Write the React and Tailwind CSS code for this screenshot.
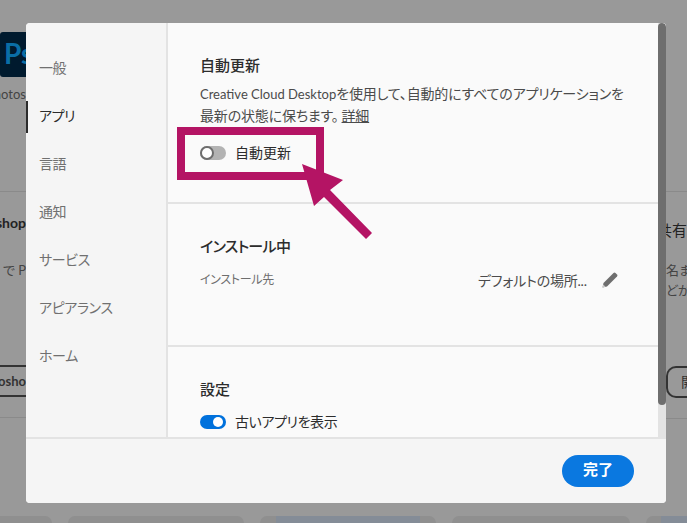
const jp = { fontFamily: '"Lato", "Noto Sans CJK JP", sans-serif' };

function Toggle({ on }) {
  return on ? (
    <span className="relative block w-[26px] h-[14px] rounded-full bg-[#0071dc]">
      <span className="absolute right-[3px] top-[2px] w-[10px] h-[10px] rounded-full bg-white" />
    </span>
  ) : (
    <span className="relative block w-[26px] h-[14px] rounded-full bg-[#b3b3b3]">
      <span className="absolute left-0 top-0 w-[14px] h-[14px] rounded-full bg-white border-[2px] border-[#6e6e6e]" />
    </span>
  );
}

const tabs = ["一般", "アプリ", "言語", "通知", "サービス", "アピアランス", "ホーム"];

function Backdrop() {
  return (
    <div className="absolute inset-0 flex flex-col">
      <div className="flex-1 flex justify-between">
        <div className="w-[26px] flex flex-col overflow-hidden whitespace-nowrap pt-[32px]">
          <div className="h-[45px] bg-[#001a2e] rounded-l-[3px] pl-[4px] text-[#0a6ea6] text-[28px] font-bold leading-[42px]">Ps</div>
          <div className="mt-[8px] text-[13px] leading-[18px] text-[#444444] flex justify-end">hotos</div>
          <div className="mt-[88px] h-px bg-[#8a8a8a]" />
          <div className="mt-[21px] text-[14px] leading-[20px] font-bold text-[#222222] flex justify-end">shop</div>
          <div className="mt-[27px] text-[13px] leading-[20px] text-[#444444] flex justify-end">で P</div>
          <div className="mt-[85px] h-[32px] border-y-[2px] border-[#333333] text-[13px] leading-[28px] font-bold text-[#333333] flex justify-end">hosho</div>
          <div className="mt-[20px] h-px bg-[#8a8a8a]" />
        </div>
        <div className="w-[21px] flex flex-col overflow-hidden whitespace-nowrap pt-[191px]">
          <div className="h-px bg-[#8a8a8a]" />
          <div className="mt-[27px] text-[15px] leading-[22px] text-[#222222] flex justify-end">共有</div>
          <div className="mt-[19px] text-[13px] leading-[20px] text-[#444444]">名ま</div>
          <div className="text-[13px] leading-[20px] text-[#444444]">どか</div>
          <div className="mt-[66px] w-[40px] h-[32px] rounded-l-[10px] border-y-[2px] border-l-[2px] border-[#333333] pl-[13px] text-[14px] leading-[28px] text-[#333333]">開</div>
          <div className="mt-[20px] h-px bg-[#8a8a8a]" />
        </div>
      </div>
      <div className="h-[7px] flex gap-[16px] shrink-0 overflow-hidden">
        <div className="w-[52px] shrink-0 rounded-tr-[8px] bg-[#8f8f8f]" />
        <div className="w-[176px] shrink-0 rounded-t-[8px] bg-[#8f8f8f]" />
        <div className="w-[176px] shrink-0 rounded-t-[8px] bg-[#8f8f8f] overflow-hidden pl-[16px] pr-[16px]"><div className="h-full bg-[#848c97]" /></div>
        <div className="w-[178px] shrink-0 rounded-t-[8px] bg-[#8f8f8f]" />
        <div className="w-[60px] shrink-0 rounded-tl-[8px] bg-[#8f8f8f] pl-[15px]"><div className="h-full bg-[#848c97]" /></div>
      </div>
    </div>
  );
}

export default function App() {
  return (
    <div style={jp} className="relative w-[687px] h-[523px] overflow-hidden bg-[#999999] pl-[26px] pt-[23px] [font-feature-settings:'palt']">
      <Backdrop />

      {/* dialog */}
      <div className="relative w-[640px] h-[480px] rounded-[4px] overflow-hidden bg-[#f5f5f5] flex flex-col">
        <div className="h-[414px] flex shrink-0">
          <nav className="relative w-[140px] shrink-0 pt-[20px] bg-[#f5f5f5]">
            {tabs.map((t, i) => (
              <div key={t} className={`h-[48px] pl-[13px] flex items-center text-[14px] tracking-[-0.4px] ${i === 1 ? "text-[#2c2c2c]" : "text-[#707070]"}`}>{t}</div>
            ))}
            <span className="absolute left-0 top-[78px] w-[2px] h-[32px] bg-[#2c2c2c]" />
          </nav>
          <div className="w-[2px] shrink-0 bg-[#e3e3e3]" />
          <main className="w-[490px] shrink-0 bg-[#fafafa] overflow-hidden">
            <section className="h-[179px] pl-[32px] pt-[32px]">
              <h2 className="text-[15px] leading-[20px] font-medium text-[#2c2c2c]">自動更新</h2>
              <p className="mt-[8px] w-[440px] text-[14px] leading-[21px] text-[#4b4b4b] tracking-[-0.18px]"><span className="text-[13px] tracking-normal">Creative Cloud Desktop</span>を使用して、自動的にすべてのアプリケーションを<br />最新の状態に保ちます。<span className="underline ml-[3px]">詳細</span></p>
              <div className="mt-[17px] flex items-center gap-[9px]">
                <Toggle />
                <span className="text-[14px] leading-[20px] text-[#2c2c2c]">自動更新</span>
              </div>
            </section>
            <div className="h-[2px] bg-[#e3e3e3]" />
            <section className="h-[141px] pl-[32px] pt-[32px]">
              <h2 className="text-[15px] leading-[20px] font-medium tracking-[-0.7px] text-[#2c2c2c]">インストール中</h2>
              <div className="mt-[14px] flex items-center h-[20px]">
                <span className="w-[278px] text-[12px] tracking-[-0.3px] text-[#6e6e6e]">インストール先</span>
                <span className="w-[124px] text-[14px] tracking-[-0.2px] text-[#4b4b4b] whitespace-nowrap overflow-hidden">デフォルトの場所...</span>
                <svg width="16" height="16" viewBox="0 0 16 16"><path d="M0.5 15.5 L1.5 11 L11.5 1 Q12.5 0 13.5 1 L15 2.5 Q16 3.5 15 4.5 L5 14.5 Z" fill="#6e6e6e" /><path d="M0.5 15.5 L1.2 12.4 L3.6 14.8 Z" fill="#c9c9c9" /></svg>
              </div>
            </section>
            <div className="h-[2px] bg-[#e3e3e3]" />
            <section className="pl-[32px] pt-[32px]">
              <h2 className="text-[15px] leading-[20px] font-medium text-[#2c2c2c]">設定</h2>
              <div className="mt-[13px] flex items-center gap-[9px]">
                <Toggle on />
                <span className="text-[14px] leading-[20px] tracking-[-0.4px] text-[#2c2c2c]">古いアプリを表示</span>
              </div>
            </section>
          </main>
          <div className="w-[8px] shrink-0 bg-[#e3e3e3]">
            <div className="w-[8px] h-[382px] rounded-[4px] bg-[#6e6e6e]" />
          </div>
        </div>
        <div className="h-[2px] bg-[#e3e3e3] shrink-0" />
        <footer className="flex-1 flex items-center justify-end pr-[32px] bg-[#f5f5f5]">
          <button className="w-[72px] h-[32px] rounded-full bg-[#0a78e0] text-white text-[15px] leading-[20px] font-bold pb-[5px]">完了</button>
        </footer>
      </div>

      {/* annotation */}
      <div className="absolute left-[177px] top-[127px] w-[147px] h-[53px] border-[8px] border-[#b41464]" />
      <svg className="absolute left-0 top-0 pointer-events-none" width="687" height="523" viewBox="0 0 687 523">
        <polygon points="302,164 343,180 330,190 372,233 366,239 324,197 314,206" fill="#b41464" />
      </svg>
    </div>
  );
}
